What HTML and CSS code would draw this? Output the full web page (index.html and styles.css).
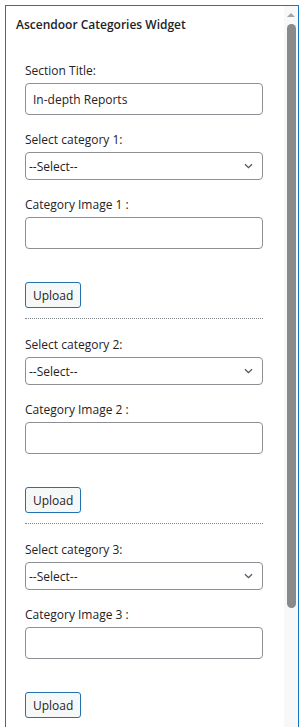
FILE: index.html
```html
<!DOCTYPE html>
<html lang="en">
<head>
    <meta charset="UTF-8">
    <meta name="viewport" content="width=device-width, initial-scale=1.0">
    <title>Ascendoor Categories Widget</title>
    <link rel="stylesheet" href="styles.css">
</head>
<body>
    <div class="panel">
        <div class="content">
            <h3 class="widget-title">Ascendoor Categories Widget</h3>

            <div class="field first">
                <label for="title">Section Title:</label>
                <input type="text" id="title" value="In-depth Reports">
            </div>

            <div class="group">
                <div class="field">
                    <label for="cat1">Select category 1:</label>
                    <div class="select-wrap">
                        <select id="cat1"><option>--Select--</option></select>
                        <svg class="chevron" width="9" height="6" viewBox="0 0 9 6"><path d="M1 1.2l3.5 3.5 3.5-3.5" fill="none" stroke="#50575e" stroke-width="1.3"/></svg>
                    </div>
                </div>
                <div class="field">
                    <label for="img1">Category Image 1 :</label>
                    <input type="text" id="img1">
                </div>
                <button class="upload">Upload</button>
            </div>

            <div class="group">
                <div class="field">
                    <label for="cat2">Select category 2:</label>
                    <div class="select-wrap">
                        <select id="cat2"><option>--Select--</option></select>
                        <svg class="chevron" width="9" height="6" viewBox="0 0 9 6"><path d="M1 1.2l3.5 3.5 3.5-3.5" fill="none" stroke="#50575e" stroke-width="1.3"/></svg>
                    </div>
                </div>
                <div class="field">
                    <label for="img2">Category Image 2 :</label>
                    <input type="text" id="img2">
                </div>
                <button class="upload">Upload</button>
            </div>

            <div class="group last">
                <div class="field">
                    <label for="cat3">Select category 3:</label>
                    <div class="select-wrap">
                        <select id="cat3"><option>--Select--</option></select>
                        <svg class="chevron" width="9" height="6" viewBox="0 0 9 6"><path d="M1 1.2l3.5 3.5 3.5-3.5" fill="none" stroke="#50575e" stroke-width="1.3"/></svg>
                    </div>
                </div>
                <div class="field">
                    <label for="img3">Category Image 3 :</label>
                    <input type="text" id="img3">
                </div>
                <button class="upload">Upload</button>
            </div>
        </div>

        <div class="scrollbar">
            <div class="arrow-up"></div>
            <div class="thumb"></div>
        </div>
    </div>
</body>
</html>
```

FILE: styles.css
```css
html, body {
    margin: 0;
    padding: 0;
    overflow: hidden;
    background: #fff;
}
body {
    font-family: 'Open Sans', 'Noto Sans', sans-serif;
    font-size: 12px;
    color: #1d2327;
}
.panel {
    margin: 5px 0 0 5px;
    width: 292px;
    height: 740px;
    border: 1px solid #1478c8;
    border-bottom: none;
    display: flex;
}
.content {
    flex: 1;
    padding: 10px 21px 0 19px;
}
.widget-title {
    margin: 0 0 28px -9px;
    font-size: 12px;
    font-weight: 600;
    line-height: 18px;
}
.field {
    display: flex;
    flex-direction: column;
    margin-bottom: 16px;
}
.field label {
    line-height: 18px;
    margin-bottom: 3px;
}
input[type="text"] {
    height: 32px;
    box-sizing: border-box;
    border: 1px solid #8c8f94;
    border-radius: 4px;
    padding: 0 7px;
    font-family: inherit;
    font-size: 12px;
    color: #1d2327;
    background: #fff;
    outline: none;
}
.select-wrap {
    position: relative;
}
select {
    width: 100%;
    height: 28px;
    box-sizing: border-box;
    border: 1px solid #8c8f94;
    border-radius: 4px;
    padding: 0 3px;
    font-family: inherit;
    font-size: 12px;
    color: #1d2327;
    background: #fff;
    appearance: none;
    outline: none;
}
.chevron {
    position: absolute;
    right: 10px;
    top: 11px;
}
.group .field:nth-child(2) {
    margin-bottom: 33px;
}
.upload {
    height: 26px;
    padding: 0 7px;
    border: 1px solid #2271b1;
    border-radius: 3px;
    background: #f6f7f7;
    font-family: inherit;
    font-size: 12px;
    color: #1d2327;
}
.group {
    display: flex;
    flex-direction: column;
    align-items: flex-start;
    padding-bottom: 10px;
    border-bottom: 1px dotted #80858a;
    margin-bottom: 17px;
}
.group .field {
    align-self: stretch;
}
.group.last {
    border-bottom: none;
}
.scrollbar {
    width: 14px;
    background: #f8f8f8;
    display: flex;
    flex-direction: column;
    align-items: center;
}
.arrow-up {
    margin-top: 7px;
    width: 0;
    height: 0;
    border-left: 4px solid transparent;
    border-right: 4px solid transparent;
    border-bottom: 4px solid #a3a3a3;
}
.thumb {
    margin-top: 7px;
    width: 9px;
    height: 584px;
    border-radius: 5px;
    background: #8a8a8a;
}
```
